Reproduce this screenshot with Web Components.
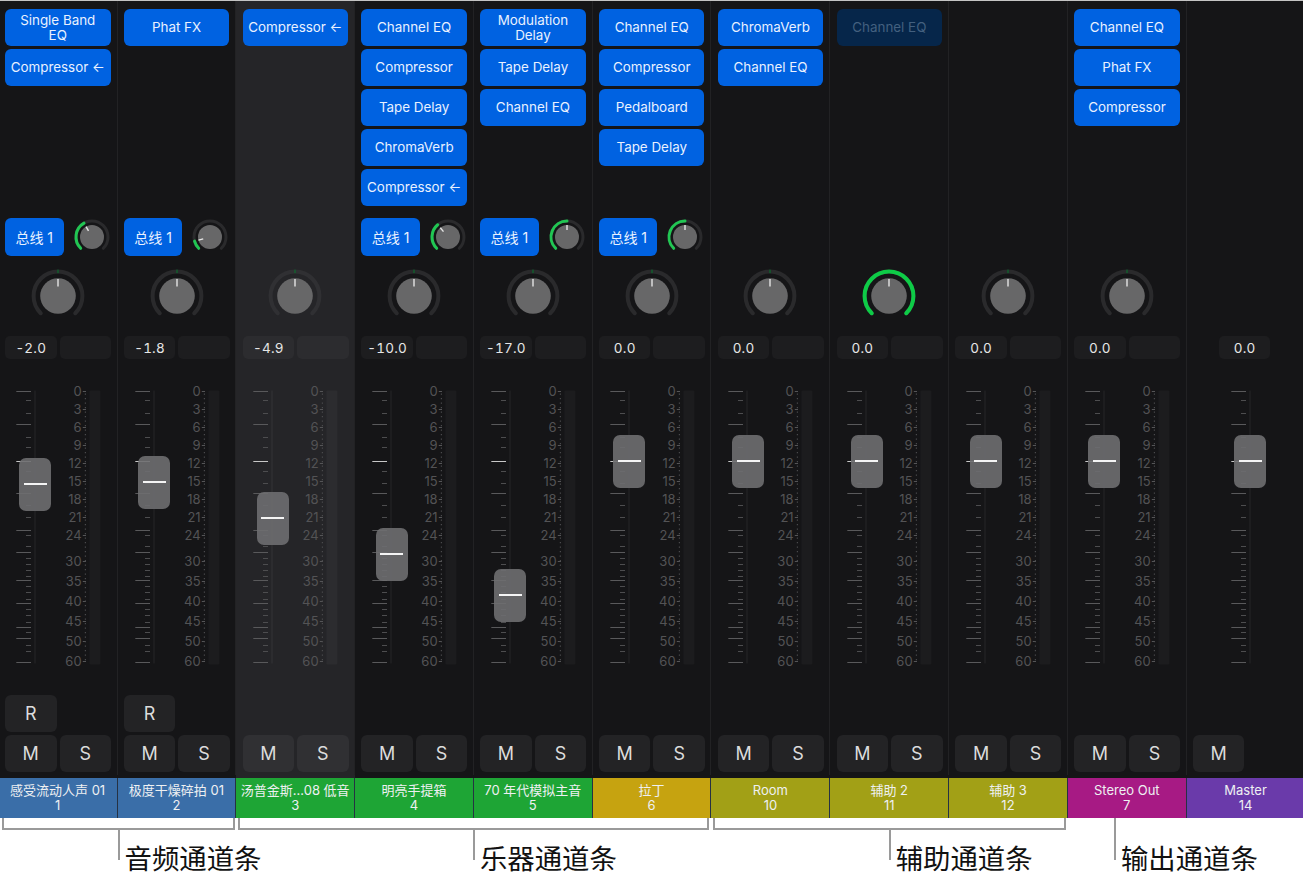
<!DOCTYPE html>
<html lang="zh">
<head>
<meta charset="utf-8">
<title>混音器通道条</title>
<style>
    html, body { margin: 0; background: #fff; }
    body { width: 1303px; height: 878px; overflow: hidden; font-family: Inter, "Noto Sans CJK SC", sans-serif; }
</style>
</head>
<body>
<mix-console>
    <mix-strip name="感受流动人声 01" num="1" color="#3a6ea8" send="-30" value="-2.0" handle="484" rec>
        <fx-btn>Single Band<br>EQ</fx-btn><fx-btn>Compressor ←</fx-btn>
    </mix-strip>
    <mix-strip name="极度干燥碎拍 01" num="2" color="#3a6ea8" send="-105" value="-1.8" handle="482" rec>
        <fx-btn>Phat FX</fx-btn>
    </mix-strip>
    <mix-strip name="汤普金斯...08 低音" num="3" color="#1ea535" value="-4.9" handle="518" selected>
        <fx-btn>Compressor ←</fx-btn>
    </mix-strip>
    <mix-strip name="明亮手提箱" num="4" color="#1ea535" send="-40" value="-10.0" handle="554">
        <fx-btn>Channel EQ</fx-btn><fx-btn>Compressor</fx-btn><fx-btn>Tape Delay</fx-btn><fx-btn>ChromaVerb</fx-btn><fx-btn>Compressor ←</fx-btn>
    </mix-strip>
    <mix-strip name="70 年代模拟主音" num="5" color="#1ea535" send="0" value="-17.0" handle="595">
        <fx-btn>Modulation<br>Delay</fx-btn><fx-btn>Tape Delay</fx-btn><fx-btn>Channel EQ</fx-btn>
    </mix-strip>
    <mix-strip name="拉丁" num="6" color="#c6a310" send="0" value="0.0" handle="461">
        <fx-btn>Channel EQ</fx-btn><fx-btn>Compressor</fx-btn><fx-btn>Pedalboard</fx-btn><fx-btn>Tape Delay</fx-btn>
    </mix-strip>
    <mix-strip name="Room" num="10" color="#a2a016" value="0.0" handle="461">
        <fx-btn>ChromaVerb</fx-btn><fx-btn>Channel EQ</fx-btn>
    </mix-strip>
    <mix-strip name="辅助 2" num="11" color="#a2a016" value="0.0" handle="461" pan-on>
        <fx-btn off>Channel EQ</fx-btn>
    </mix-strip>
    <mix-strip name="辅助 3" num="12" color="#a2a016" value="0.0" handle="461"></mix-strip>
    <mix-strip name="Stereo Out" num="7" color="#a71a84" value="0.0" handle="461">
        <fx-btn>Channel EQ</fx-btn><fx-btn>Phat FX</fx-btn><fx-btn>Compressor</fx-btn>
    </mix-strip>
    <mix-strip name="Master" num="14" color="#6a3aaa" value="0.0" handle="461" master></mix-strip>
</mix-console>
<call-outs>
    <call-out style="grid-column: 1 / span 2; margin: 0 1.3px 0 3.3px">音频通道条</call-out>
    <call-out style="grid-column: 3 / span 4; margin: 0 2px">乐器通道条</call-out>
    <call-out style="grid-column: 7 / span 3; margin: 0 2px">辅助通道条</call-out>
    <call-out plain style="grid-column: 10 / span 2; --stem: 46px">输出通道条</call-out>
</call-outs>

<script>
    // ring angles: 0 is straight up, clockwise positive, the ring runs -135..135
    function arcPath(cx, cy, r, from, to) {
        const pt = (a) => {
            const rad = (a - 90) * Math.PI / 180;
            return (cx + r * Math.cos(rad)).toFixed(2) + " " + (cy + r * Math.sin(rad)).toFixed(2);
        };
        const large = to - from > 180 ? 1 : 0;
        return `M${pt(from)}A${r} ${r} 0 ${large} 1 ${pt(to)}`;
    }

    class MixConsole extends HTMLElement {
        constructor() {
            super();
            this.attachShadow({ mode: "open" }).innerHTML = `
                <style>
                    :host {
                        display: block;
                        height: 818px;
                        overflow: hidden;
                        border-top: 1px solid #c4c4c4;
                        box-sizing: border-box;
                        background: #151517;
                    }
                    .row {
                        display: grid;
                        grid-template-columns: repeat(11, 118.8px);
                        margin-left: -1.3px;
                    }
                </style>
                <div class="row"><slot></slot></div>
            `;
        }
    }

    class FxBtn extends HTMLElement {
        constructor() {
            super();
            this.attachShadow({ mode: "open" }).innerHTML = `
                <style>
                    :host {
                        display: flex;
                        align-items: center;
                        justify-content: center;
                        box-sizing: border-box;
                        height: 37px;
                        border-radius: 6px;
                        background: #0062e1;
                        color: #e9f1ff;
                        font-size: 13.4px;
                        line-height: 15px;
                        text-align: center;
                        white-space: nowrap;
                    }
                    :host([off]) {
                        background: #06264a;
                        color: #43607f;
                    }
                </style>
                <span><slot></slot></span>
            `;
        }
    }

    class MixKnob extends HTMLElement {
        constructor() {
            super();
            this.attachShadow({ mode: "open" });
        }

        connectedCallback() {
            const small = this.hasAttribute("small");
            const size = small ? 38 : 60;
            const c = size / 2;
            const ringR = small ? 16 : 24.4;
            const ringW = small ? 3 : 4;
            const discR = small ? 12 : 17.8;
            const value = parseFloat(this.getAttribute("value")) || 0;
            const on = this.hasAttribute("on");
            let green = "";
            if (small) {
                green = `<path d="${arcPath(c, c, ringR, -135, value)}" stroke="#21c653" stroke-width="3" fill="none" stroke-linecap="round"/>`;
            } else if (on) {
                green = `<path d="${arcPath(c, c, ringR, -135, 135)}" stroke="#0ecb47" stroke-width="4" fill="none" stroke-linecap="round"/>`;
            } else {
                green = `<rect x="${c - 0.6}" y="${c - 26.4}" width="1.2" height="3.6" fill="#0c6a2e"/>`;
            }
            const rad = (value - 90) * Math.PI / 180;
            const p1 = small ? 7 : 9.5;
            const p2 = small ? 12 : 17;
            this.shadowRoot.innerHTML = `
                <style>
                    :host { display: block; width: ${size}px; height: ${size}px; }
                    svg { display: block; }
                </style>
                <svg width="${size}" height="${size}" viewBox="0 0 ${size} ${size}">
                    <path d="${arcPath(c, c, ringR, -135, 135)}" stroke="var(--ring, #2a2a2c)" stroke-width="${ringW}" fill="none" stroke-linecap="round"/>
                    ${green}
                    <circle cx="${c}" cy="${c}" r="${discR}" fill="#676768"/>
                    <line x1="${c + p1 * Math.cos(rad)}" y1="${c + p1 * Math.sin(rad)}" x2="${c + p2 * Math.cos(rad)}" y2="${c + p2 * Math.sin(rad)}" stroke="#e6e6e6" stroke-width="1.4"/>
                </svg>
            `;
        }
    }

    const LONG_TICKS = [391, 424, 461, 493, 530, 552, 580, 603, 627, 638, 662];
    const SHORT_TICKS = [400, 413, 437, 447, 471, 483, 505, 517, 535, 546, 558, 564, 570, 576, 586, 592, 599, 609, 615, 622, 632, 645, 651];
    const DB_MARKS = [[0, 391], [3, 409], [6, 427], [9, 445], [12, 463], [15, 481], [18, 499], [21, 517], [24, 535], [30, 561], [35, 581], [40, 601], [45, 621], [50, 641], [60, 661]];
    const FADER_TOP = 359;

    class MixFader extends HTMLElement {
        constructor() {
            super();
            this.attachShadow({ mode: "open" });
        }

        connectedCallback() {
            const master = this.hasAttribute("master");
            const dx = master ? 27 : 0;
            const handle = parseFloat(this.getAttribute("handle"));
            const y = (v) => v - FADER_TOP + 0.5;
            const ticks = LONG_TICKS.map((v) => {
                const col = v === 461 ? "#c8c8c8" : "#59595b";
                return `<line x1="${17.3 + dx}" x2="${32 + dx}" y1="${y(v)}" y2="${y(v)}" stroke="${col}"/>`;
            }).concat(SHORT_TICKS.map((v) =>
                `<line x1="${27 + dx}" x2="${32 + dx}" y1="${y(v)}" y2="${y(v)}" stroke="#4d4d4f"/>`
            )).join("");
            const scale = master ? "" : DB_MARKS.map(([db, v]) => `
                <text x="82.6" y="${y(v) + 4.4}" text-anchor="end">${db}</text>
                <line x1="83.8" x2="87" y1="${y(v)}" y2="${y(v)}" stroke="#555557"/>
            `).join("") + `
                <line x1="86.4" x2="86.4" y1="${y(393)}" y2="${y(660)}" stroke="#4a4a4c" stroke-width="1.2" stroke-dasharray="1.2 3.3"/>
                <rect x="90.4" y="${y(390)}" width="11" height="274" rx="1" fill="var(--meter, #1c1c1e)"/>
            `;
            this.shadowRoot.innerHTML = `
                <style>
                    :host { display: block; position: relative; height: 336px; }
                    svg { display: block; }
                    text { font: 13px Inter, sans-serif; fill: #535355; }
                    .cap {
                        position: absolute;
                        left: ${20.6 + dx}px;
                        top: ${handle - FADER_TOP - 26.5}px;
                        width: 32px;
                        height: 53px;
                        border-radius: 7px;
                        background: rgba(110, 110, 112, 0.9);
                        display: flex;
                        align-items: center;
                        justify-content: center;
                    }
                    .cap i { display: block; width: 23px; height: 1.5px; background: #f4f4f4; }
                </style>
                <svg width="118" height="336" viewBox="0 0 118 336">
                    <rect x="${35 + dx}" y="${y(390)}" width="2" height="273" fill="var(--meter, #1d1d1f)"/>
                    ${ticks}
                    ${scale}
                </svg>
                <div class="cap"><i></i></div>
            `;
        }
    }

    class MixStrip extends HTMLElement {
        constructor() {
            super();
            this.attachShadow({ mode: "open" });
        }

        connectedCallback() {
            const send = this.getAttribute("send");
            const master = this.hasAttribute("master");
            const handle = this.getAttribute("handle");
            const sendRow = send === null ? "" : `
                <div class="bus">总线 1</div>
                <mix-knob small value="${send}"></mix-knob>
            `;
            const pan = master ? "" : `<mix-knob value="0" ${this.hasAttribute("pan-on") ? "on" : ""}></mix-knob>`;
            const values = master
                ? `<div class="box val master-val">${this.getAttribute("value")}</div>`
                : `<div class="box val">${this.getAttribute("value")}</div><div class="box"></div>`;
            this.shadowRoot.innerHTML = `
                <style>
                    :host {
                        display: flex;
                        flex-direction: column;
                        box-sizing: border-box;
                        height: 817px;
                        color: #e6e6e6;
                        --box: #1d1d1f;
                        --key: #232325;
                        background: #151517;
                    }
                    :host([selected]) {
                        background: #252528;
                        --box: #2c2c2f;
                        --key: #303033;
                        --ring: #303033;
                        --meter: #2c2c2f;
                    }
                    .body {
                        flex: 1;
                        display: flex;
                        flex-direction: column;
                        border-right: 1px solid #222224;
                    }
                    .fx {
                        box-sizing: border-box;
                        height: 217px;
                        padding: 8px 6px 0 6.3px;
                        display: flex;
                        flex-direction: column;
                        gap: 3px;
                    }
                    .sends {
                        height: 38px;
                        display: flex;
                        align-items: center;
                        padding-left: 6.3px;
                    }
                    .bus {
                        width: 58.5px;
                        height: 37.5px;
                        border-radius: 6px;
                        background: #0062e1;
                        color: #e9f1ff;
                        font-size: 14px;
                        padding-bottom: 1px;
                        box-sizing: border-box;
                        display: flex;
                        align-items: center;
                        justify-content: center;
                        margin-right: 9px;
                    }
                    .pan {
                        box-sizing: border-box;
                        height: 80px;
                        padding: 10px 0 0 29px;
                    }
                    .vals, .keys {
                        display: flex;
                        gap: 3px;
                        padding-left: 6.3px;
                    }
                    .vals { height: 23px; }
                    .box {
                        width: 51.5px;
                        border-radius: 5px;
                        background: var(--box);
                        font-size: 13.5px;
                        font-variant-numeric: tabular-nums;
                        letter-spacing: 0.2px;
                        display: flex;
                        align-items: center;
                        justify-content: center;
                    }
                    .master-val { margin-left: 26px; }
                    .keys { height: 37px; margin-bottom: 2.5px; }
                    .key {
                        width: 51.5px;
                        border-radius: 6px;
                        background: var(--key);
                        color: #dcdcdc;
                        font-size: 18px;
                        display: flex;
                        align-items: center;
                        justify-content: center;
                    }
                    .name {
                        height: 40px;
                        box-sizing: border-box;
                        margin-top: 3.5px;
                        padding-top: 5px;
                        background: var(--tag);
                        border-right: 1.5px solid #263243;
                        color: #eef0f2;
                        font-size: 13px;
                        line-height: 15px;
                        text-align: center;
                        white-space: nowrap;
                        overflow: hidden;
                    }
                </style>
                <div class="body">
                    <div class="fx"><slot></slot></div>
                    <div class="sends">${sendRow}</div>
                    <div class="pan">${pan}</div>
                    <div class="vals">${values}</div>
                    <mix-fader handle="${handle}" ${master ? "master" : ""}></mix-fader>
                    <div class="keys">${this.hasAttribute("rec") ? '<div class="key">R</div>' : ""}</div>
                    <div class="keys">
                        <div class="key">M</div>
                        ${master ? "" : '<div class="key">S</div>'}
                    </div>
                </div>
                <div class="name" style="--tag: ${this.getAttribute("color")}">
                    ${this.getAttribute("name")}<br>${this.getAttribute("num")}
                </div>
            `;
        }
    }

    class CallOuts extends HTMLElement {
        constructor() {
            super();
            this.attachShadow({ mode: "open" }).innerHTML = `
                <style>
                    :host {
                        display: grid;
                        grid-template-columns: repeat(11, 118.8px);
                        margin-left: -1.3px;
                        height: 60px;
                    }
                </style>
                <slot></slot>
            `;
        }
    }

    class CallOut extends HTMLElement {
        constructor() {
            super();
            this.attachShadow({ mode: "open" }).innerHTML = `
                <style>
                    :host { display: block; color: #111; }
                    .brace {
                        height: 10px;
                        border: 2px solid #9a9a9a;
                        border-top: 0;
                    }
                    :host([plain]) .brace { border: 0; height: 12px; }
                    .foot {
                        display: flex;
                        margin-left: var(--stem, calc(50% - 1px));
                    }
                    .stem { width: 2px; height: 30px; background: #9a9a9a; flex: none; }
                    :host([plain]) .stem { height: 42px; margin-top: -12px; }
                    .text {
                        margin: 11px 0 0 5px;
                        font: 400 27.4px/32px "Noto Sans CJK SC", sans-serif;
                        white-space: nowrap;
                    }
                </style>
                <div class="brace"></div>
                <div class="foot"><div class="stem"></div><div class="text"><slot></slot></div></div>
            `;
        }
    }

    window.customElements.define("mix-console", MixConsole);
    window.customElements.define("fx-btn", FxBtn);
    window.customElements.define("mix-knob", MixKnob);
    window.customElements.define("mix-fader", MixFader);
    window.customElements.define("mix-strip", MixStrip);
    window.customElements.define("call-outs", CallOuts);
    window.customElements.define("call-out", CallOut);
</script>
</body>
</html>
